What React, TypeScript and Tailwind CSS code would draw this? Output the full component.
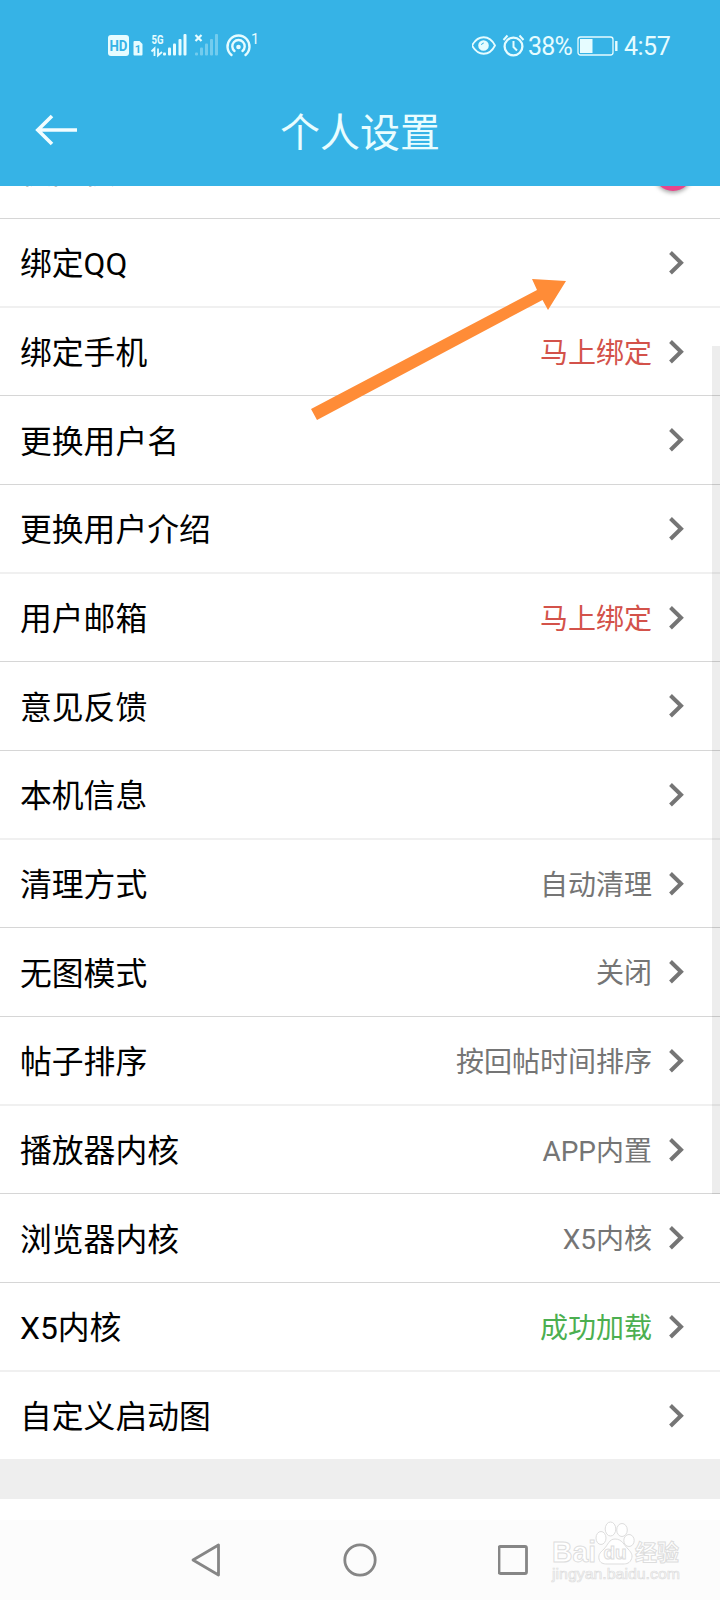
type Tone = 'red' | 'gray' | 'green';

interface Row {
  label: string;
  value?: string;
  tone?: Tone;
}

const rows: Row[] = [
  { label: '绑定QQ' },
  { label: '绑定手机', value: '马上绑定', tone: 'red' },
  { label: '更换用户名' },
  { label: '更换用户介绍' },
  { label: '用户邮箱', value: '马上绑定', tone: 'red' },
  { label: '意见反馈' },
  { label: '本机信息' },
  { label: '清理方式', value: '自动清理', tone: 'gray' },
  { label: '无图模式', value: '关闭', tone: 'gray' },
  { label: '帖子排序', value: '按回帖时间排序', tone: 'gray' },
  { label: '播放器内核', value: 'APP内置', tone: 'gray' },
  { label: '浏览器内核', value: 'X5内核', tone: 'gray' },
  { label: 'X5内核', value: '成功加载', tone: 'green' },
  { label: '自定义启动图' },
];

const tones: Record<Tone, string> = {
  red: 'text-[#d3524a]',
  gray: 'text-[#757575]',
  green: 'text-[#4caf50]',
};

// Rows are 88⅔px tall, so the divider rounding repeats every three rows.
const rowBoxes = [
  'h-[89px] border-b-2 border-[#f0f0f0]',
  'h-[88px] border-b border-[#d6d6d6]',
  'h-[89px] border-b border-[#d6d6d6]',
];

function StatusBar() {
  return (
    <div className="flex h-[90px] items-center justify-between pl-[107px] pr-[50px] text-[#e6fcff]">
      <svg width="152" height="30" viewBox="0 0 152 30" fill="currentColor">
        <rect x="1" y="5" width="21" height="21" rx="3" />
        <text x="11.5" y="20.5" textAnchor="middle" fontFamily="Roboto, sans-serif" fontSize="14" fontWeight="700" textLength="18" lengthAdjust="spacingAndGlyphs" fill="#36b3e6">HD</text>
        <path d="M27.500 11h5l3 3v10.500a1 1 0 0 1-1 1h-7a1 1 0 0 1-1-1v-12.500a1 1 0 0 1 1-1z" />
        <text x="30.800" y="22.500" textAnchor="middle" fontFamily="Roboto, sans-serif" fontSize="11" fontWeight="700" fill="#36b3e6">1</text>
        <text x="44.500" y="13.500" fontFamily="Roboto, sans-serif" fontSize="13" fontWeight="700" textLength="12" lengthAdjust="spacingAndGlyphs">5G</text>
        <path d="M44.500 21.500l3-3v7.500M51 18.500v7l4-3.500" fill="none" stroke="currentColor" strokeWidth="1.800" />
        <rect x="56" y="22.500" width="3" height="3" rx="1" />
        <rect x="61" y="17.500" width="3" height="8" rx="1" />
        <rect x="66" y="13.500" width="3" height="12" rx="1" />
        <rect x="71.500" y="9" width="3" height="16.500" rx="1" />
        <rect x="76.500" y="4" width="3" height="21.500" rx="1" />
        <path d="M88.500 5l6 6m0-6l-6 6" stroke="currentColor" strokeWidth="2.200" />
        <g opacity="0.35">
          <rect x="88" y="22.500" width="3" height="3" rx="1" />
          <rect x="93" y="17.500" width="3" height="8" rx="1" />
          <rect x="98" y="13.500" width="3" height="12" rx="1" />
          <rect x="103" y="9" width="3" height="16.500" rx="1" />
          <rect x="108" y="4" width="3" height="21.500" rx="1" />
        </g>
        <g fill="none" stroke="currentColor" strokeWidth="2.400" strokeLinecap="round">
          <path d="M124.500 25a11 11 0 1 1 14 0" />
          <path d="M127.500 21a6.200 6.200 0 1 1 8 0" />
        </g>
        <circle cx="131.500" cy="17" r="2.300" />
        <text x="144" y="13.500" fontFamily="Roboto, sans-serif" fontSize="14.500">1</text>
      </svg>
      <div className="flex h-[30px] items-center">
        <svg width="56" height="30" viewBox="2 0 56 30" fill="none" stroke="currentColor" strokeWidth="2">
          <path d="M2 15.500C8 4.500 19.500 4.500 25 15.500C19.500 26.500 8 26.500 2 15.500z" strokeWidth="1.800" />
          <circle cx="13.500" cy="15.500" r="4.300" fill="currentColor" />
          <path d="M11.500 15a2.300 2.300 0 0 1 2.300-2" stroke="#36b3e6" strokeWidth="1" />
          <circle cx="43.500" cy="16.500" r="8.900" strokeWidth="2.300" />
          <path d="M43.500 11v6l3.500 3.500M33.500 10l4-4.500M53.500 10l-4-4.500" />
        </svg>
        <span className="mt-[3px] w-[45px] whitespace-nowrap font-[Roboto,sans-serif] text-[25px] leading-[30px] tracking-[-0.800px]">38%</span>
        <svg width="42" height="30" viewBox="0 0 42 30" fill="none" stroke="currentColor" className="ml-[3px]">
          <rect x="2" y="7" width="35" height="18" rx="2.500" strokeWidth="1.300" />
          <rect x="4" y="9" width="12.500" height="14" fill="currentColor" stroke="none" />
          <path d="M40.300 11v10" strokeWidth="2.400" />
        </svg>
        <span className="ml-[6px] mt-[3px] w-[46px] whitespace-nowrap font-[Roboto,sans-serif] text-[25px] leading-[30px] tracking-[-0.500px]">4:57</span>
      </div>
    </div>
  );
}

function Chevron() {
  return (
    <svg width="18" height="26" viewBox="0 0 18 26" fill="none" stroke="#757575" strokeWidth="4" className="shrink-0">
      <path d="M2.500 2.500L13 12.700L2.500 23" />
    </svg>
  );
}

function Watermark() {
  return (
    <svg width="136" height="68" viewBox="0 0 136 68" fill="#ffffff" stroke="#dddddd" strokeWidth="1" className="absolute left-[549px] top-[1520px]">
      <text x="3" y="42" fontFamily="Liberation Sans, sans-serif" fontSize="30" fontWeight="700" textLength="44" lengthAdjust="spacingAndGlyphs">Bai</text>
      <ellipse cx="52" cy="18" rx="5" ry="6.500" />
      <ellipse cx="61.500" cy="9" rx="5.300" ry="7" />
      <ellipse cx="73" cy="10" rx="5.300" ry="6.500" />
      <ellipse cx="80" cy="20.500" rx="5.200" ry="6" />
      <path d="M66 19c7 0 9 6 13 10c4 4 5 7 3 11c-2 4-6 4-9 4h-15c-4 0-7-1-8-5c-1-5 2-7 5-10c4-4 5-10 11-10z" />
      <text x="66" y="39" textAnchor="middle" fontFamily="Liberation Sans, sans-serif" fontSize="19" fontWeight="700">du</text>
      <text x="86" y="40" fontFamily="Noto Sans CJK SC, sans-serif" fontSize="22" fontWeight="700">经验</text>
      <text x="3" y="59" fontFamily="Liberation Sans, sans-serif" fontSize="15" fontWeight="400" strokeWidth="0.700" textLength="128" lengthAdjust="spacingAndGlyphs">jingyan.baidu.com</text>
    </svg>
  );
}

export default function App() {
  return (
    <div className="relative flex h-[1600px] w-[720px] flex-col overflow-hidden bg-white font-[Roboto,'Noto_Sans_CJK_SC',sans-serif]">
      <header className="flex h-[186px] shrink-0 flex-col bg-[#36b3e6]">
        <StatusBar />
        <div className="flex h-[80px] items-center px-[34px]">
          <svg width="44" height="34" viewBox="0 0 44 34" fill="none" stroke="#f2fdff" strokeWidth="3.600">
            <path d="M43 17H4M18 3L3.800 17L18 31" />
          </svg>
          <h1 className="mt-[7px] flex-1 pr-[44px] text-center text-[40px] leading-[60px] text-[#e9fdff]">个人设置</h1>
        </div>
      </header>

      <main className="flex flex-col">
        <div className="relative h-[33px] overflow-hidden border-b border-[#d6d6d6]">
          <span className="absolute left-[20px] top-[-30px] text-[31.800px] leading-[32px] text-black">夜间模式</span>
          <span className="absolute left-[654px] top-[-33px] size-[38px] rounded-full bg-[#e9458b] shadow-[0_2px_4px_rgba(0,0,0,0.350)]" />
        </div>
        {rows.map((row, i) => (
          <div
            key={row.label}
            className={`flex shrink-0 items-center pl-[20px] pr-[34px] ${i === rows.length - 1 ? 'h-[87px]' : rowBoxes[i % 3]}`}
          >
            <span className="mt-[3px] flex-1 text-[31.800px] leading-[48px] text-black">{row.label}</span>
            {row.value && (
              <span className={`mr-[16px] mt-[4px] text-[28px] leading-[42px] ${tones[row.tone ?? 'gray']}`}>{row.value}</span>
            )}
            <Chevron />
          </div>
        ))}
        <div className="h-[40px] bg-[#eeeeee]" />
      </main>

      <nav className="mt-auto flex h-[80px] items-center justify-between bg-[#fcfcfc] pl-[190px] pr-[190px]">
        <svg width="32" height="36" viewBox="0 0 32 36" fill="none" stroke="#868686" strokeWidth="2.800" strokeLinejoin="round">
          <path d="M3 18L28.500 3V33z" />
        </svg>
        <svg width="36" height="36" viewBox="0 0 36 36" fill="none" stroke="#868686" strokeWidth="2.800">
          <circle cx="18" cy="18" r="15.200" />
        </svg>
        <svg width="32" height="36" viewBox="0 0 32 36" fill="none" stroke="#868686" strokeWidth="2.800">
          <rect x="1" y="4.500" width="27.500" height="27" rx="1.500" />
        </svg>
      </nav>

      <div className="absolute left-[712px] top-[346px] h-[848px] w-[8px] bg-black/7" />
      <svg width="264" height="150" viewBox="302 275 264 150" fill="#ff8c37" className="absolute left-[302px] top-[275px]">
        <path d="M311 409L537 290L532 279L566 281L548 310L542.500 300L317 420z" />
      </svg>
      <Watermark />
    </div>
  );
}
